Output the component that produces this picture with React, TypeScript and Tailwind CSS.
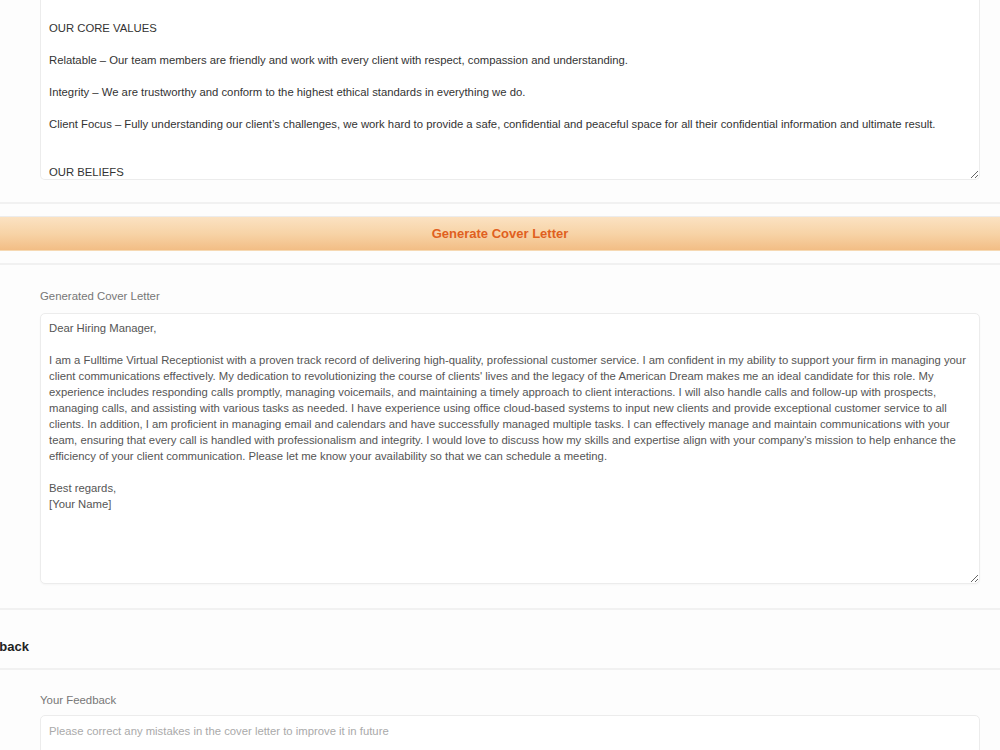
import React from 'react';

const aboutText = `OUR CORE VALUES

Relatable – Our team members are friendly and work with every client with respect, compassion and understanding.

Integrity – We are trustworthy and conform to the highest ethical standards in everything we do.

Client Focus – Fully understanding our client’s challenges, we work hard to provide a safe, confidential and peaceful space for all their confidential information and ultimate result.


OUR BELIEFS
We believe every client deserves attention.`;

const letterText = `Dear Hiring Manager,

I am a Fulltime Virtual Receptionist with a proven track record of delivering high-quality, professional customer service. I am confident in my ability to support your firm in managing your client communications effectively. My dedication to revolutionizing the course of clients' lives and the legacy of the American Dream makes me an ideal candidate for this role. My experience includes responding calls promptly, managing voicemails, and maintaining a timely approach to client interactions. I will also handle calls and follow-up with prospects, managing calls, and assisting with various tasks as needed. I have experience using office cloud-based systems to input new clients and provide exceptional customer service to all clients. In addition, I am proficient in managing email and calendars and have successfully managed multiple tasks. I can effectively manage and maintain communications with your team, ensuring that every call is handled with professionalism and integrity. I would love to discuss how my skills and expertise align with your company's mission to help enhance the efficiency of your client communication. Please let me know your availability so that we can schedule a meeting.

Best regards,
[Your Name]`;

const font = "font-['Liberation_Sans',Arial,sans-serif]";

export default function App() {
  return (
    <div className={`w-[1000px] h-[750px] overflow-hidden bg-[#fdfdfd] ${font}`}>
      {/* Company description (scrolled) */}
      <div className="pl-10 pr-[20px] pb-[22px] border-b-2 border-[#f1f1f1]">
        <textarea
          readOnly
          value={aboutText}
          className="block w-[940px] h-[180px] overflow-hidden pt-[20px] px-[8px] text-[11.3px] leading-[16px] text-[#333] bg-white border border-t-0 border-[#ececec] rounded-b-[5px] outline-none resize-y"
        />
      </div>

      {/* Generate button */}
      <div className="mt-[12px] h-[35px] flex items-center justify-center border-t border-[#ececec] bg-gradient-to-b from-[#fbe2c2] via-[#f7d3a6] to-[#f2bc83] shadow-[inset_0_-1px_0_#f6d9b3]">
        <span className="text-[13px] font-bold text-[#e0601e]">Generate Cover Letter</span>
      </div>

      {/* Generated letter */}
      <div className="mt-[12px] border-t-2 border-[#f1f1f1] pt-[23px] pl-10 pr-[20px] pb-[24px] border-b-2 border-b-[#f1f1f1]">
        <div className="text-[11.4px] leading-[16px] text-[#777] mb-[9px]">Generated Cover Letter</div>
        <textarea
          readOnly
          value={letterText}
          className="block w-[940px] h-[271px] overflow-hidden pt-[6px] px-[8px] text-[11.3px] leading-[16px] text-[#555] bg-white border border-[#ececec] rounded-[5px] outline-none resize-y shadow-[0_1px_2px_rgba(0,0,0,0.03)]"
        />
      </div>

      {/* Feedback heading */}
      <div className="pt-[27px] pb-[11px] border-b-2 border-[#f1f1f1] overflow-hidden">
        <h2 className="ml-[-31px] text-[13px] leading-[20px] font-bold text-[#222]">Feedback</h2>
      </div>

      {/* Feedback field */}
      <div className="pt-[22px] pl-10 pr-[20px]">
        <div className="text-[11.4px] leading-[16px] text-[#777] mb-[7px]">Your Feedback</div>
        <textarea
          placeholder="Please correct any mistakes in the cover letter to improve it in future"
          className="block w-[940px] h-[120px] pt-[7px] px-[8px] text-[11.3px] leading-[16px] text-[#555] placeholder:text-[#aaa] bg-white border border-[#ececec] rounded-[5px] outline-none resize-y"
        />
      </div>
    </div>
  );
}
